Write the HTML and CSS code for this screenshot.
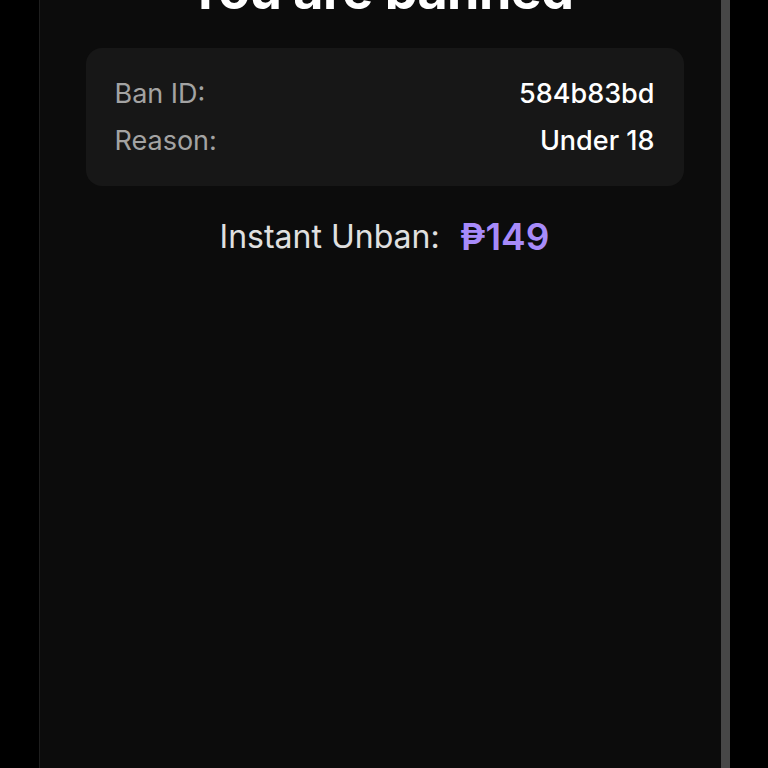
FILE: index.html
```html
<!DOCTYPE html>
<html lang="en">
<head>
    <meta charset="UTF-8">
    <meta name="viewport" content="width=device-width, initial-scale=1.0">
    <title>Banned</title>
    <link rel="stylesheet" href="styles.css">
</head>
<body>
    <div class="screen">
        <h1 class="title">You are banned</h1>
        <div class="card">
            <div class="row">
                <span class="label">Ban ID:</span>
                <span class="value">584b83bd</span>
            </div>
            <div class="row">
                <span class="label">Reason:</span>
                <span class="value">Under 18</span>
            </div>
        </div>
        <div class="unban">
            <span class="unban-label">Instant Unban:</span>
            <span class="price">₱149</span>
        </div>
    </div>
</body>
</html>
```

FILE: styles.css
```css
html, body {
    margin: 0;
    height: 100%;
    background: #000;
    overflow: hidden;
}
body {
    font-family: Inter, "Noto Sans", sans-serif;
    color: #fff;
}
.screen {
    display: flow-root;
    width: 681px;
    height: 100%;
    margin: 0 auto;
    background: #0c0c0c;
    border-left: 1px solid #1e1e1e;
    border-right: 9px solid #474747;
}
.title {
    margin: -40px 0 0;
    font-size: 52px;
    line-height: 62px;
    font-weight: 700;
    text-align: center;
    letter-spacing: -0.5px;
}
.card {
    margin: 26px 37px 0 46px;
    padding: 22px 29px;
    background: #171717;
    border-radius: 16px;
}
.row {
    display: flex;
    justify-content: space-between;
    align-items: center;
    height: 47px;
    font-size: 27px;
}
.label {
    color: #a3a3a3;
}
.value {
    color: #fff;
    font-weight: 500;
}
.unban {
    display: flex;
    justify-content: center;
    align-items: center;
    gap: 20px;
    margin: 28px 37px 0 46px;
}
.unban-label {
    font-size: 32px;
    color: #e0e0e0;
}
.price {
    font-size: 37px;
    font-weight: 600;
    color: #a78bfa;
}
```
